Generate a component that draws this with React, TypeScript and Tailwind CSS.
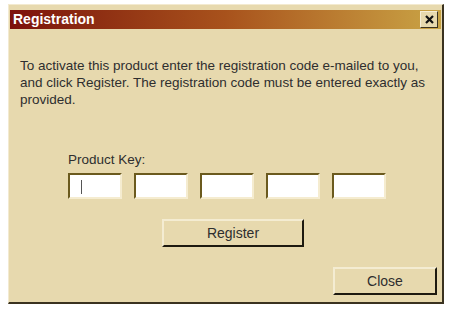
import { useState } from "react";

const face = "font-['Liberation_Sans',Arial,sans-serif]";

function KeyBox({ first }: { first?: boolean }) {
  return (
    <div className="relative w-[54px] h-[26px] bg-white border-2 border-t-[#6b5a1e] border-l-[#6b5a1e] border-b-[#f5ecd0] border-r-[#f5ecd0]">
      {first && <span className="absolute left-[11px] top-[5px] w-px h-[14px] bg-[#555]" />}
    </div>
  );
}

function Button({ label, className }: { label: string; className: string }) {
  return (
    <button
      type="button"
      className={`${className} h-[28px] bg-[#e7d9ae] border-2 border-t-[#f4ecd2] border-l-[#f4ecd2] border-b-[#1e1a10] border-r-[#1e1a10] text-[14px] text-[#2e2e2e] ${face}`}
    >
      {label}
    </button>
  );
}

export default function App() {
  const [keys] = useState([0, 1, 2, 3, 4]);

  return (
    <div className="w-[450px] h-[314px] bg-white pt-[4px] pl-[8px]">
      <div className="w-[436px] h-[300px] flex flex-col bg-[#e7d9ae] border-l border-t border-l-[#f3ead0] border-t-[#f3ead0] border-r-2 border-b-2 border-r-[#3a3220] border-b-[#3a3220]">
        {/* Title bar */}
        <div className="mt-[5px] mx-[1px] h-[19px] flex items-center justify-between pl-[3px] pr-[3px] bg-gradient-to-r from-[#7c0f0c] via-[#a8521c] to-[#c9a445]">
          <span className={`text-white font-bold text-[14px] ${face}`}>Registration</span>
          <span className="w-[18px] h-[17px] flex items-center justify-center bg-[#e7d9ae] border border-t-[#f6eed6] border-l-[#f6eed6] border-b-[#3a3220] border-r-[#3a3220]">
            <svg width="9" height="9" viewBox="0 0 9 9">
              <path d="M1 1L8 8M8 1L1 8" stroke="#111" strokeWidth="2.2" />
            </svg>
          </span>
        </div>

        <p className={`mt-[28px] ml-[11px] text-[13.5px] leading-[17px] text-[#2e2e2e] ${face}`}>
          To activate this product enter the registration code e-mailed to you,
          <br />
          and click Register. The registration code must be entered exactly as
          <br />
          provided.
        </p>

        <div className={`mt-[43px] ml-[59px] text-[13.5px] leading-[17px] text-[#2e2e2e] ${face}`}>Product Key:</div>
        <div className="mt-[5px] ml-[59px] flex gap-[12px]">
          {keys.map((k) => (
            <KeyBox key={k} first={k === 0} />
          ))}
        </div>

        <Button label="Register" className="mt-[20px] ml-[153px] w-[142px]" />
        <div className="mt-[20px] flex justify-end pr-[5px]">
          <Button label="Close" className="w-[104px]" />
        </div>
      </div>
    </div>
  );
}
